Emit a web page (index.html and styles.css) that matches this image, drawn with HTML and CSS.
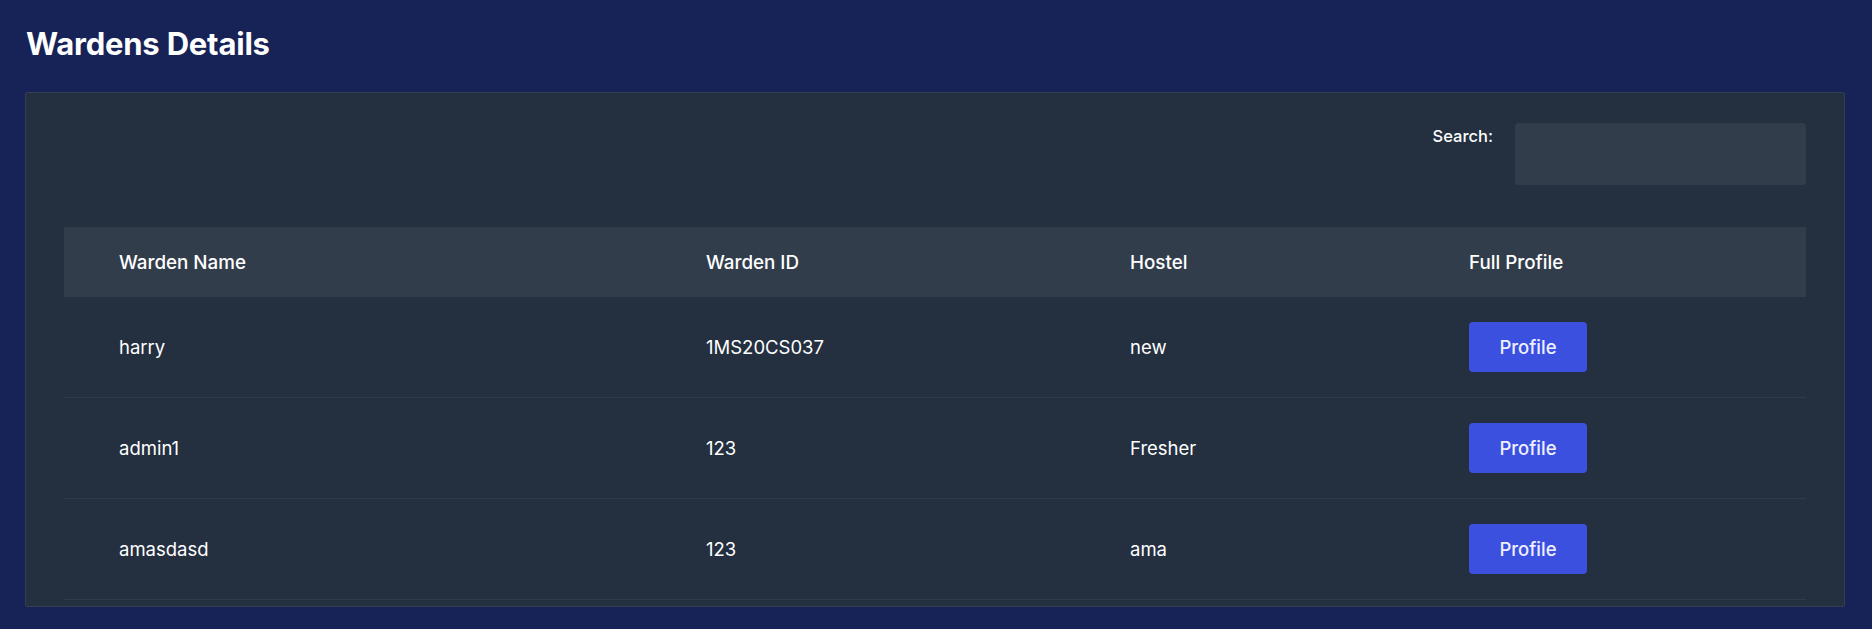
FILE: index.html
```html
<!DOCTYPE html>
<html>
<head>
<meta charset="utf-8">
<link rel="stylesheet" href="styles.css">
</head>
<body>
<div class="page">
  <h1 class="title">Wardens Details</h1>
  <div class="card">
    <div class="toolbar">
      <label class="search-label">Search:</label>
      <div class="search-input"></div>
    </div>
    <div class="table">
      <div class="row head">
        <div class="cell">Warden Name</div>
        <div class="cell">Warden ID</div>
        <div class="cell">Hostel</div>
        <div class="cell">Full Profile</div>
      </div>
      <div class="row">
        <div class="cell">harry</div>
        <div class="cell">1MS20CS037</div>
        <div class="cell">new</div>
        <div class="cell"><button class="btn">Profile</button></div>
      </div>
      <div class="row">
        <div class="cell">admin1</div>
        <div class="cell">123</div>
        <div class="cell">Fresher</div>
        <div class="cell"><button class="btn">Profile</button></div>
      </div>
      <div class="row">
        <div class="cell">amasdasd</div>
        <div class="cell">123</div>
        <div class="cell">ama</div>
        <div class="cell"><button class="btn">Profile</button></div>
      </div>
    </div>
  </div>
</div>
</body>
</html>
```
FILE: styles.css
```css
html, body {
  margin: 0;
  padding: 0;
  background: #172356;
  font-family: "Inter", "Noto Sans", sans-serif;
  color: #ffffff;
}
.page {
  padding: 22px 27px 24px 25px;
}
.title {
  margin: 0 0 0 1px;
  font-size: 31px;
  font-weight: 700;
  line-height: 44px;
  letter-spacing: -0.2px;
}
.card {
  margin-top: 26px;
  background: #242f40;
  border: 1px solid #333e51;
  border-radius: 2px;
  padding: 30px 38px 6px 38px;
}
.toolbar {
  display: flex;
  justify-content: flex-end;
  align-items: flex-start;
  gap: 22px;
}
.search-label {
  font-size: 16.5px;
  font-weight: 500;
  padding-top: 3px;
}
.search-input {
  width: 291px;
  height: 62px;
  background: #323d4c;
  border-radius: 4px;
}
.table {
  margin-top: 42px;
}
.row {
  display: grid;
  grid-template-columns: 587px 424px 339px 393px;
  height: 100px;
  align-items: center;
  border-bottom: 1px solid #2f3a4b;
  font-size: 18.5px;
}
.row.head {
  height: 70px;
  background: #323d4c;
  border-bottom: none;
  font-weight: 500;
  font-size: 18.8px;
}
.cell {
  padding-left: 55px;
}
.btn {
  width: 118px;
  height: 50px;
  border: none;
  border-radius: 4px;
  background: #3c50e0;
  color: #eef0ff;
  font-family: inherit;
  font-size: 18.5px;
  font-weight: 500;
  cursor: pointer;
}
```
